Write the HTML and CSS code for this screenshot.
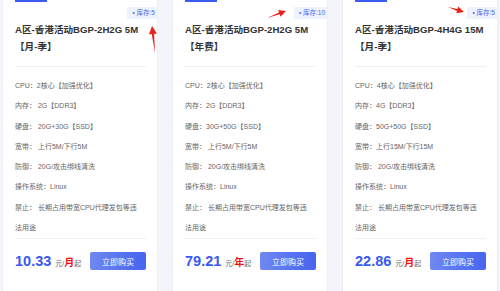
FILE: index.html
```html
<!DOCTYPE html>
<html lang="zh-CN">
  <head>
    <meta charset="UTF-8" />
    <meta name="viewport" content="width=device-width, initial-scale=1.0" />
    <title>香港活动套餐</title>
    <link rel="stylesheet" href="styles.css">
  </head>
  <body>
    <main class="plans">
      <div class="card">
        <span class="bar"></span>
        <span class="stock">• 库存:5</span>
        <h3 class="title">A区-香港活动BGP-2H2G 5M<br />【月-季】</h3>
        <ul class="specs">
          <li>CPU：2核心【加强优化】</li>
          <li>内存： 2G【DDR3】</li>
          <li>硬盘： 20G+30G【SSD】</li>
          <li>宽带： 上行5M/下行5M</li>
          <li>防御： 20G/攻击绑线清洗</li>
          <li>操作系统：Linux</li>
          <li>禁止： 长期占用带宽CPU代理发包等违<br />法用途</li>
        </ul>
        <div class="buy">
          <div class="price">10.33 <small>元/<b>月</b>起</small></div>
          <button class="buy-btn">立即购买</button>
        </div>
      </div>
      <div class="card">
        <span class="bar"></span>
        <span class="stock">• 库存:10</span>
        <h3 class="title">A区-香港活动BGP-2H2G 5M<br />【年费】</h3>
        <ul class="specs">
          <li>CPU：2核心【加强优化】</li>
          <li>内存：2G【DDR3】</li>
          <li>硬盘：30G+50G【SSD】</li>
          <li>宽带： 上行5M/下行5M</li>
          <li>防御： 20G/攻击绑线清洗</li>
          <li>操作系统：Linux</li>
          <li>禁止： 长期占用带宽CPU代理发包等违<br />法用途</li>
        </ul>
        <div class="buy">
          <div class="price">79.21 <small>元/<b>年</b>起</small></div>
          <button class="buy-btn">立即购买</button>
        </div>
      </div>
      <div class="card">
        <span class="bar"></span>
        <span class="stock">• 库存:5</span>
        <h3 class="title">A区-香港活动BGP-4H4G 15M<br />【月-季】</h3>
        <ul class="specs">
          <li>CPU：4核心【加强优化】</li>
          <li>内存：4G【DDR3】</li>
          <li>硬盘：50G+50G【SSD】</li>
          <li>宽带：上行15M/下行15M</li>
          <li>防御： 20G/攻击绑线清洗</li>
          <li>操作系统：Linux</li>
          <li>禁止： 长期占用带宽CPU代理发包等违<br />法用途</li>
        </ul>
        <div class="buy">
          <div class="price">22.86 <small>元/<b>月</b>起</small></div>
          <button class="buy-btn">立即购买</button>
        </div>
      </div>
    </main>
    <!-- red annotation arrows drawn over the screenshot -->
    <svg class="arrows" width="500" height="291" viewBox="0 0 500 291">
      <polygon points="152,26 156.9,33.6 154.1,33.9 155,53 151.7,34.1 148.9,34.4" />
      <polygon points="286,11 280.6,16.7 279.7,14.3 267,18 279.1,12.5 278.2,10.1" />
      <polygon points="464,12 456.3,13.2 457,10.9 448,7 457.6,8.9 458.3,6.6" />
    </svg>
  </body>
</html>
```

FILE: styles.css
```css
* {
  padding: 0;
  margin: 0;
  box-sizing: border-box;
}
body {
  background-color: #f3f5fa;
  font-family: "Liberation Sans", "Noto Sans CJK SC", sans-serif;
  width: 500px;
  height: 291px;
  overflow: hidden;
  position: relative;
}
.plans {
  display: flex;
  gap: 14px;
  padding-left: 2px;
}
.card {
  position: relative;
  width: 156px;
  height: 300px;
  background-color: #fff;
  border: 1px solid #eceff6;
  border-top: none;
  padding: 21px 11px 0 12px;
}
.bar {
  position: absolute;
  top: 0;
  left: 12px;
  width: 32px;
  height: 2px;
  background-color: #3b5bf2;
}
.stock {
  position: absolute;
  top: 7px;
  right: -1px;
  padding: 0 3px 0 5px;
  height: 12px;
  line-height: 12px;
  font-size: 6.5px;
  color: #4a67ee;
  background-color: #eef2fd;
}
.title {
  font-size: 9.6px;
  line-height: 17px;
  font-weight: bold;
  color: #333;
  white-space: nowrap;
  padding-bottom: 11px;
  border-bottom: 1px solid #eef0f4;
}
.specs {
  list-style: none;
  padding: 9px 0 0;
  font-size: 7px;
  line-height: 20.3px;
  color: #666;
  border-bottom: 1px solid #eef0f4;
}
.buy {
  display: flex;
  justify-content: space-between;
  align-items: center;
  padding-top: 13px;
}
.price {
  font-size: 14.5px;
  font-weight: bold;
  color: #3b58f0;
}
.price small {
  font-size: 7px;
  font-weight: normal;
  color: #666;
}
.price b {
  font-size: 10px;
  color: #f01414;
}
.buy-btn {
  width: 56px;
  height: 18px;
  border: none;
  border-radius: 2px;
  color: #fff;
  font-size: 8px;
  font-family: "Noto Sans CJK SC", sans-serif;
  background: linear-gradient(90deg, #7088f1, #4664ef);
  cursor: pointer;
}
.arrows {
  position: absolute;
  top: 0;
  left: 0;
  pointer-events: none;
}
.arrows polygon {
  fill: #e8231c;
}
```
